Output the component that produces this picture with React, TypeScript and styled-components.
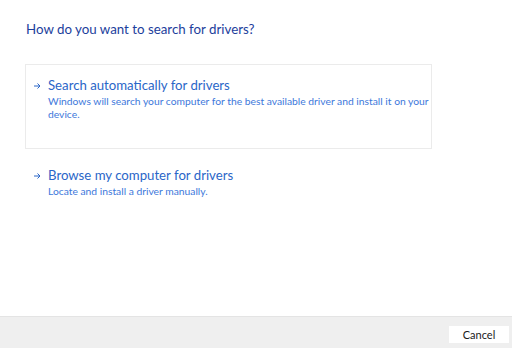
import React from "react";
import styled, { createGlobalStyle } from "styled-components";

const Global = createGlobalStyle`
  html, body { margin: 0; padding: 0; background: #ffffff; }
  body { font-family: Lato, "Noto Sans", sans-serif; }
  #root { width: 512px; height: 348px; }
  * { box-sizing: border-box; }
`;

const Window = styled.div`
  width: 512px;
  height: 348px;
  display: flex;
  flex-direction: column;
  background: #ffffff;
`;

const Body = styled.main`
  flex: 1;
  display: flex;
  flex-direction: column;
  padding: 20px 80px 0 25px;
`;

const Heading = styled.h1`
  margin: 0;
  font-size: 13.3px;
  font-weight: 400;
  line-height: 18px;
  color: #1c3e9c;
  padding-left: 1px;
`;

const Option = styled.div<{ $boxed?: boolean }>`
  display: flex;
  align-items: flex-start;
  gap: 7px;
  height: 85px;
  padding: 11px 0 0 7px;
  border: 1px solid ${(p) => (p.$boxed ? "#ebebeb" : "transparent")};
  margin-top: ${(p) => (p.$boxed ? "26px" : "5px")};
`;

const Arrow = styled.svg`
  width: 8px;
  height: 8px;
  margin-top: 6px;
  flex: none;
`;

const Texts = styled.div`
  display: flex;
  flex-direction: column;
  max-width: 382px;
`;

const Title = styled.div`
  font-size: 13.2px;
  line-height: 18px;
  color: #2a66c8;
`;

const Desc = styled.div`
  font-size: 10.3px;
  line-height: 13px;
  margin-top: 1px;
  color: #3d78db;
`;

const Footer = styled.footer`
  height: 32px;
  border-top: 1px solid #e4e4e4;
  background: #efefef;
  display: flex;
  align-items: flex-start;
  justify-content: flex-end;
  padding: 9px 3px 0 0;
`;

const Button = styled.button`
  width: 60px;
  height: 17px;
  border: none;
  background: #ffffff;
  font-family: Lato, "Noto Sans", sans-serif;
  font-size: 11px;
  color: #1a1a1a;
  padding: 0;
`;

const ArrowIcon = () => (
  <Arrow viewBox="0 0 8 8">
    <path d="M1 4 H7 M4.5 1.5 L7 4 L4.5 6.5" stroke="#2a66c8" strokeWidth="1" fill="none" />
  </Arrow>
);

export default function App() {
  return (
    <>
      <Global />
      <Window>
        <Body>
          <Heading>How do you want to search for drivers?</Heading>
          <Option $boxed>
            <ArrowIcon />
            <Texts>
              <Title>Search automatically for drivers</Title>
              <Desc>
                Windows will search your computer for the best available driver and install it on your device.
              </Desc>
            </Texts>
          </Option>
          <Option>
            <ArrowIcon />
            <Texts>
              <Title>Browse my computer for drivers</Title>
              <Desc>Locate and install a driver manually.</Desc>
            </Texts>
          </Option>
        </Body>
        <Footer>
          <Button>Cancel</Button>
        </Footer>
      </Window>
    </>
  );
}
